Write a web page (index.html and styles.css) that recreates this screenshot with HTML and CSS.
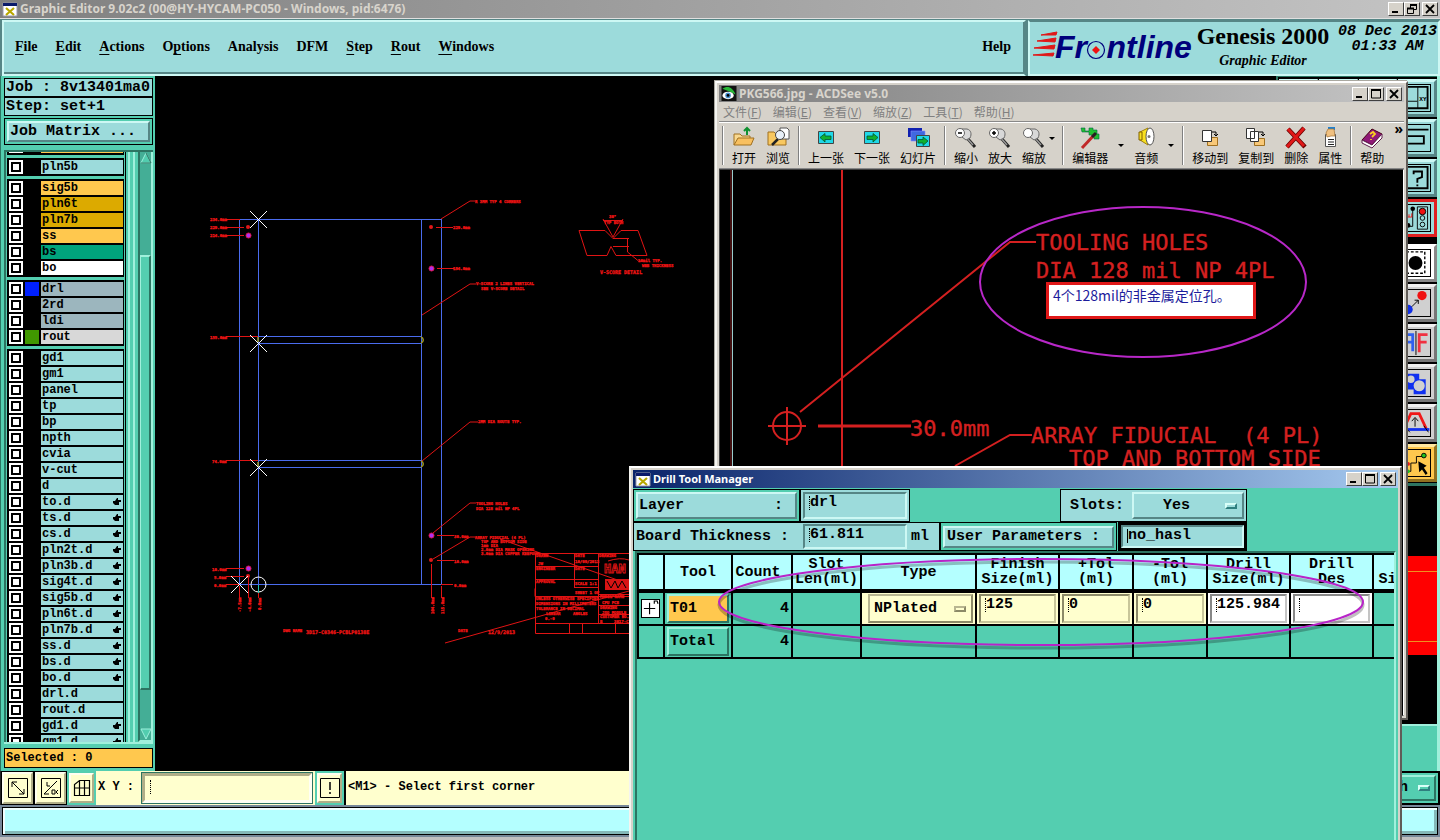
FILE: index.html
```html
<!DOCTYPE html>
<html lang="en">
<head>
<meta charset="utf-8">
<title>Graphic Editor</title>
<link rel="stylesheet" href="styles.css">
</head>
<body>
<svg class="defs" width="0" height="0" aria-hidden="true">
  <symbol id="xwin" viewBox="0 0 16 15"><path d="M1 1h14v13H1z" fill="#fff" stroke="#99a"/><path d="M1 1h14v3H1z" fill="#0a1a6a"/><path d="M4 6l8 7M12 6l-8 7" stroke="#b8a800" stroke-width="2.2"/></symbol>
  <symbol id="min" viewBox="0 0 12 10"><path d="M2 8h6" stroke="#000" stroke-width="2"/></symbol>
  <symbol id="max" viewBox="0 0 12 10"><path d="M1.5 1v8h9V1M1 1h10" fill="none" stroke="#000"/><path d="M1 1h10" stroke="#000" stroke-width="2"/></symbol>
  <symbol id="res" viewBox="0 0 12 10"><path d="M4.500 4V1.500h6v4H8M1.500 4.500h6v5h-6z" fill="none" stroke="#000"/><path d="M4 1h7M1 4.500h7" stroke="#000" stroke-width="1.800"/></symbol>
  <symbol id="cls" viewBox="0 0 12 10"><path d="M2 1l8 8M10 1l-8 8" stroke="#000" stroke-width="1.800"/></symbol>
  <symbol id="lens" viewBox="0 0 24 24"><path d="M14 13l7 8" stroke="#222" stroke-width="3"/><path d="M13 12l6 7" stroke="#999" stroke-width="1.500"/><path d="M5 3h8c4 1 5 5 3 9l-4 2-8-6z" fill="#d8d8d8" stroke="#666"/><circle cx="6" cy="7" r="4.500" fill="#fff" stroke="#666"/></symbol>
  <symbol id="hand" viewBox="0 0 8 8"><path d="M4 0h1v2h3v2H6v3H2L0 5V3h2z"/></symbol>
</svg>

<div class="app">
  <header class="title title-main">
    <svg class="tico"><use href="#xwin"/></svg><h1>Graphic Editor 9.02c2 (00@HY-HYCAM-PC050 - Windows, pid:6476)</h1>
    <span class="wbtns"><button aria-label="Minimize"><svg><use href="#min"/></svg></button><button aria-label="Restore"><svg><use href="#res"/></svg></button><button class="x" aria-label="Close"><svg><use href="#cls"/></svg></button></span>
  </header>

  <div class="menurow">
    <nav class="menubar">
      <button><u>F</u>ile</button><button><u>E</u>dit</button><button><u>A</u>ctions</button><button>O<u>p</u>tions</button><button>Analysis</button><button>DFM</button><button><u>S</u>tep</button><button><u>R</u>out</button><button><u>W</u>indows</button>
      <button class="help">Help</button>
    </nav>
    <div class="brand">
      <svg class="logo" width="162" height="34" viewBox="0 0 162 34" role="img" aria-label="Frontline">
        <path d="M8 5l16-3-1 3zM4 11l19-3-1 4zM1 18l21-3-1 4zM0 25l21-2-1 3z" fill="#e01818" stroke="#e01818"/>
        <text x="22" y="28" class="logotext">Fr<tspan fill="none">o</tspan>ntline</text>
        <circle cx="63" cy="20" r="8.500" fill="none" stroke="#00007c" stroke-width="1.200"/>
        <path d="M63 16l4 4-4 4-4-4z" fill="#f01010"/>
      </svg>
      <div class="product"><strong>Genesis 2000</strong><em>Graphic Editor</em></div>
      <div class="date">08 Dec 2013<br>01:33 AM</div>
    </div>
  </div>

  <div class="work">
    <aside class="side">
      <div class="info">Job : 8v13401ma0</div>
      <div class="info">Step: set+1</div>
      <div class="jm"><button class="bev">Job Matrix ...</button></div>
      <div class="listwrap">
        <div class="list" id="layers"></div>
        <div class="ridges"></div>
        <div class="sbar">
          <svg viewBox="0 0 12 12"><path d="M6 1l5 10H1z" fill="#52cdaf" stroke="#9cf0dc"/><path d="M6 1l5 10H1" fill="none" stroke="#246e5c"/></svg>
          <div class="track"><div class="thumb"></div></div>
          <svg viewBox="0 0 12 12"><path d="M6 11l5-10H1z" fill="#52cdaf" stroke="#9cf0dc"/></svg>
        </div>
      </div>
      <div class="selected">Selected : 0</div>
    </aside>

    <main class="canvas">
      <svg width="1130" height="700" viewBox="155 75 1130 700">
        <g fill="none" stroke="#4a6cee" shape-rendering="crispEdges">
          <path d="M239.500 219.500h202v365h-202zM258.500 219v365M421.500 219v365M258 336.500h163M258 343.500h163M258 460.500h163M258 467.500h163"/>
        </g>
        <g fill="none" stroke="#a09a20" stroke-width="1.500"><path d="M258 337v5M258 462v5M421 337c3 1 3 5 0 6M421 461c3 1 3 5 0 6"/></g>
        <g fill="none" stroke="#e01414">
          <path d="M226 219.500h14M226 227.500h18M226 235.500h18M226 336.500h32M226 460.500h32M226 568.500h18M226 576.500h18M226 584.500h14M436 227.500h17M437 268.500h17M437 535.500h17M437 560.500h17M441 584.500h12"/>
          <path d="M441 219l29-18h5M422 315l48-31h6M422 461l48-39h8M433 533l37-30h6M433 559l37-22h6M239.500 586v12M248.500 578v20M258.500 588v10M431.500 564v34M441.500 586v12M445 643l184-52M500 539l129 45"/>
          <path d="M579 230.500h26l8 8 8-8h17l9 25h-31l-5-9-4 9h-20zM603 219l10 18 10-18M603 220.500h20M613 238.500h16M613 246.500h16M627.500 238v14l11 9h4"/>
          <path d="M629 553.500h-93.500v80H629M535 566.500h63M535 579.500h63M574 587.500h24M535 588.500v8H629M574.500 553v35M598.500 553v70M598 594.500h31M535 623.500h94M569.500 623v10M582.500 623v10M615.500 623v10M598 605.500h31M598 614.500h31"/>
          <path d="M608 561q12-4 21-1"/>
        </g>
        <g fill="#e01818"><circle cx="248" cy="227" r="2"/><circle cx="431" cy="227" r="2"/><circle cx="248" cy="576" r="2"/><circle cx="431" cy="560" r="2"/></g>
        <g fill="#b030f0" stroke="#e01850"><circle cx="248.500" cy="235.500" r="2.500"/><circle cx="431.500" cy="268.500" r="2.500"/><circle cx="248.500" cy="568.500" r="2.500"/><circle cx="431.500" cy="535.500" r="2.500"/></g>
        <g fill="none" stroke="#fff"><path d="M250 211l17 17M267 211l-17 17M250 335l17 17M267 335l-17 17M250 459l17 17M267 459l-17 17M231 576l17 17M248 576l-17 17"/><circle cx="258.500" cy="584.500" r="7.500"/></g>
        <path d="M258.500 585v8" stroke="#20c8b0"/>
        <g class="cad4">
          <text x="210" y="221">234.0mm</text><text x="210" y="229">229.0mm</text><text x="210" y="237">214.0mm</text><text x="210" y="339">155.0mm</text><text x="212" y="463">74.0mm</text><text x="212" y="571">10.0mm</text><text x="214" y="579">5.0mm</text><text x="214" y="587">0.0mm</text>
          <text x="453" y="229">229.0mm</text><text x="453" y="270">194.0mm</text><text x="454" y="538">30.0mm</text><text x="454" y="563">10.0mm</text><text x="454" y="587">0.0mm</text>
          <text x="475" y="203">R 3MM TYP 4 CORNERS</text><text x="476" y="285">V-SCORE 2 LINES VERTICAL</text><text x="481" y="290">SEE V-SCORE DETAIL</text>
          <text x="478" y="423">2MM DIA ROUTE TYP.</text><text x="476" y="505">TOOLING HOLES</text><text x="476" y="510">DIA 128 mil NP 4PL</text>
          <text x="475" y="539">ARRAY FIDUCIAL  (4 PL)</text><text x="481" y="543">TOP AND BOTTOM SIDE</text><text x="481" y="547">1mm DIA</text><text x="481" y="551">2.0mm DIA MASK OPENING</text><text x="481" y="555">3.0mm DIA COPPER KEEPOUT</text>
          <text x="609" y="218">30°</text><text x="604" y="224">TYP BOTH</text><text x="638" y="262">10mil TYP.</text><text x="642" y="267">WEB THICKNESS</text>
          <text x="536" y="557">DRAWN</text><text x="538" y="565">JW</text><text x="575" y="557">DATE</text><text x="575" y="563">10/09/2013</text><text x="599" y="557">DRAWING</text><text x="536" y="570">ENGINEER</text><text x="575" y="570">DATE</text><text x="536" y="583">APPROVAL</text><text x="575" y="585">SCALE 1:1</text><text x="575" y="594">SHEET 1 OF</text>
          <text x="536" y="600">UNLESS OTHERWISE SPECIFIED</text><text x="536" y="605">DIMENSIONS IN MILLIMETERS</text><text x="536" y="610">TOLERANCE IN DECIMAL</text><text x="546" y="615">LINEAR</text><text x="573" y="615">ANGLES</text><text x="545" y="620">0.-0</text><text x="600" y="598">MODEL NAME</text><text x="602" y="604">CPU PCB</text><text x="600" y="609">DRAWING</text><text x="602" y="614">JSO MODULE</text><text x="600" y="618">CUSTOMER NO.</text><text x="600" y="623">B</text><text x="614" y="623">3017-C</text>
          <text x="283" y="632">DWG NAME</text><text x="458" y="632">DATE</text>
          <text transform="translate(241 612) rotate(-90)">-7.5mm</text><text transform="translate(251 612) rotate(-90)">-4.0mm</text><text transform="translate(261 610) rotate(-90)">0.0mm</text><text transform="translate(434 614) rotate(-90)">104.0mm</text><text transform="translate(444 614) rotate(-90)">115.0mm</text>
        </g>
        <g class="cad5"><text x="600" y="274">V-SCORE DETAIL</text><text x="306" y="634">3D17-C0346-PCBLP0138E</text><text x="488" y="634">12/9/2013</text></g>
        <text x="604" y="573" class="han">HAN</text>
        <path d="M605 579h24v11h-24z" fill="#d81414"/><path d="M607 581l4 7 4-7 3 7 4-7 4 7" fill="none" stroke="#000"/>
      </svg>
    </main>

    <aside class="tools">
      <div class="toolgrid">
        <button class="t" aria-label="Zoom"></button><button class="t" aria-label="Pan"></button><button class="t" aria-label="Home"></button>
        <button class="t" aria-label="Coordinates"><svg viewBox="0 0 30 28"><path d="M-2 2h30v23H-2z" fill="none" stroke="#000" stroke-width="2"/><path d="M17.500 2v23M17 17.500H0" stroke="#000"/><text x="19" y="17" font-size="6">XY</text></svg></button>
        <button class="t c4" aria-label="Path"><svg viewBox="0 0 30 28"><path d="M29 5H2v7h22v8H2" fill="none" stroke="#000" stroke-width="2"/></svg></button>
        <button class="t c4" aria-label="Help"><svg viewBox="0 0 30 28"><path d="M0 2h28v23H0" fill="none" stroke="#000" stroke-width="2"/><path d="M13 10V7h9v6l-5 2v4M17 21v2" fill="none" stroke="#000" stroke-width="2"/></svg></button>
        <button class="t c4 red" aria-label="Control"><svg viewBox="0 0 30 28"><path d="M17 2h11v24H17z" fill="#9cdbdb" stroke="#000"/><circle cx="22.500" cy="7" r="3.500" fill="#f01010" stroke="#000"/><circle cx="22.500" cy="14" r="2.500" fill="none" stroke="#000"/><circle cx="22.500" cy="21" r="2.500" fill="none" stroke="#000"/><path d="M12 4v19H6" fill="none" stroke="#000"/><circle cx="12" cy="4" r="2.500"/><circle cx="7" cy="22" r="2.500"/><path d="M11 9v4M5 13h6M8 10v3" stroke="#f01010"/></svg></button>
        <button class="t c4 wh gapt" aria-label="Select"><svg viewBox="0 0 30 28"><path d="M0 2h25v23H0" fill="none" stroke="#000" stroke-width="1.500" stroke-dasharray="3 2"/><circle cx="15" cy="14" r="7.500"/></svg></button>
        <button class="t c4 gr" aria-label="Move"><svg viewBox="0 0 30 28"><circle cx="22" cy="6" r="5" fill="#f01010"/><circle cx="7" cy="21" r="5" fill="#1030e8"/><path d="M11 18l7-7M14 11h4v4" fill="none" stroke="#000"/></svg></button>
        <button class="t c4 gr" aria-label="Mirror"><svg viewBox="0 0 30 28"><path d="M0 5h12v18M0 13h12" fill="none" stroke="#3060f0" stroke-width="3"/><path d="M15.500 1v26" stroke="#000"/><path d="M19 24V5h9M19 13h8" fill="none" stroke="#f03040" stroke-width="3"/></svg></button>
        <button class="t c4 gr" aria-label="Shapes"><svg viewBox="0 0 30 28"><path d="M0 4h19v6h7v16H13v-5H0z" fill="#1030f0"/><circle cx="10" cy="10" r="4" fill="#d0d0d0"/><circle cx="19" cy="17" r="6" fill="#d0d0d0"/></svg></button>
        <button class="t c4 gr" aria-label="Profile"><svg viewBox="0 0 30 28"><path d="M2 21L10 4h9l8 17" fill="none" stroke="#f01818" stroke-width="3"/><path d="M0 21h30" stroke="#1030f0" stroke-width="3"/><path d="M14.500 18V9M11 12l3.500-4 3.500 4M2 17l7 7M24 17l5 7" fill="none" stroke="#000"/></svg></button>
        <button class="t c4 or" aria-label="Chain"><svg viewBox="0 0 30 28"><path d="M4 23h6V14h6V7h7" fill="none" stroke="#000"/><circle cx="24" cy="6" r="2.500" fill="#20c020" stroke="#000"/><circle cx="7" cy="15" r="2" fill="#e01818"/><circle cx="7" cy="23" r="2" fill="#20c020"/><path d="M18 12l9 5-3 2 4 6-2 2-4-6-3 3z"/></svg></button>
      </div>
      <div class="overview"><div class="redboard"></div></div>
      <div class="toolfoot"></div>
    </aside>
  </div>

  <footer class="cmd">
    <button class="sq" aria-label="Pick"><svg viewBox="0 0 20 20"><path d="M.5.5h19v19H.5zM4 4l12 12M4 9V4h5M16 11v5h-5" fill="none" stroke="#000"/></svg></button>
    <button class="sq" aria-label="Angle"><svg viewBox="0 0 20 20"><path d="M.5.5h19v19H.5zM3 16L16 3M6 4v4h3M3 16h5M11 12h3v4h-3zM17 12l-2 2 2 2" fill="none" stroke="#000"/></svg></button>
    <button class="sq grn" aria-label="Grid"><svg viewBox="0 0 20 20"><path d="M2.500 17.500v-11l5-4h10v15zM2 10h16M7.500 3v14M12.500 3v14" fill="none" stroke="#000" stroke-width="1.200"/></svg></button>
    <label for="xy">X Y :</label>
    <span class="xybox"><input id="xy" type="text"><i class="ibar"></i></span>
    <button class="sq grn bang" aria-label="Alert"><svg viewBox="0 0 20 20"><path d="M.5.5h19v19H.5z" fill="none" stroke="#000"/><path d="M10 4v8M10 14v2" stroke="#000" stroke-width="1.500"/></svg></button>
    <output>&lt;M1&gt; - Select first corner</output>
    <span class="cmdopt"><button>h<i class="ind"></i></button></span>
  </footer>
  <div class="status"><div></div></div>
</div>

<section class="win acd" aria-label="ACDSee">
  <div class="title title-acd">
    <svg class="tico" viewBox="0 0 16 16"><path d="M0 0h16v16H0z" fill="#111"/><path d="M1 3c5-4 11-2 14 6L9 6z" fill="#28b838"/><ellipse cx="7" cy="10" rx="6" ry="4" fill="#fff"/><circle cx="7" cy="10" r="3" fill="#4890d0"/><circle cx="7" cy="10" r="1.500"/></svg><h2>PKG566.jpg - ACDSee v5.0</h2>
    <span class="wbtns"><button aria-label="Minimize"><svg><use href="#min"/></svg></button><button aria-label="Maximize"><svg><use href="#max"/></svg></button><button class="x" aria-label="Close"><svg><use href="#cls"/></svg></button></span>
  </div>
  <nav class="acdmenu"><button>文件(<u>F</u>)</button><button>编辑(<u>E</u>)</button><button>查看(<u>V</u>)</button><button>缩放(<u>Z</u>)</button><button>工具(<u>T</u>)</button><button>帮助(<u>H</u>)</button></nav>
  <div class="tb">
    <i class="sep"></i>
    <button><svg viewBox="0 0 24 24"><path d="M2 19V8h6l2 2h8v3" fill="#f8d890" stroke="#a07020"/><path d="M2 19l4-7h16l-3 7z" fill="#f8c060" stroke="#a07020"/><path d="M15 9V2M12 5l3-3 3 3" fill="none" stroke="#109030" stroke-width="2"/></svg>打开</button>
    <button><svg viewBox="0 0 24 24"><path d="M2 19V6h6l2 2h10v11z" fill="#f8c860" stroke="#a07020"/><path d="M14 2h7l2 2v9h-9z" fill="#fff" stroke="#555"/><path d="M12 13l-6 6" stroke="#222" stroke-width="2.500"/><circle cx="14" cy="9" r="4.500" fill="#e8f0f8" stroke="#444"/></svg>浏览</button>
    <i class="sep"></i>
    <button><svg viewBox="0 0 24 24"><path d="M4.500 5.500h15v12h-15z" fill="#20d8e8" stroke="#444"/><path d="M6 11.500l5-4v2.500h6v3.500h-6V16z" fill="#10b030" stroke="#053" stroke-width=".8"/></svg>上一张</button>
    <button><svg viewBox="0 0 24 24"><path d="M4.500 5.500h15v12h-15z" fill="#20d8e8" stroke="#444"/><path d="M18 11.500l-5-4v2.500H7v3.500h6V16z" fill="#10b030" stroke="#053" stroke-width=".8"/></svg>下一张</button>
    <button><svg viewBox="0 0 24 24"><path d="M2 2h14v9H2z" fill="#1020b0"/><path d="M5 5h14v10H5z" fill="#4068e0" stroke="#88f" stroke-width=".6"/><path d="M10.500 9.500h13v11h-13z" fill="#20d8e8" stroke="#444"/><path d="M22 15l-5-4v2.500h-5V17h5v2.500z" fill="#10b030" stroke="#053" stroke-width=".8"/></svg>幻灯片</button>
    <i class="sep"></i>
    <button><svg><use href="#lens"/><path d="M4 7h4" stroke="#000" stroke-width="1.500"/></svg>缩小</button>
    <button><svg><use href="#lens"/><path d="M4 7h4M6 5v4" stroke="#000" stroke-width="1.500"/></svg>放大</button>
    <button class="dd"><svg><use href="#lens"/></svg>缩放</button><b class="arr in"></b>
    <i class="sep"></i>
    <button><svg viewBox="0 0 24 24"><path d="M3 2h4v3h4V2h4v2h4v4h2v5h-5V9h-5V6H4z" fill="#20c030" stroke="#064" stroke-width=".6"/><path d="M4 22L17 8" stroke="#c02828" stroke-width="3"/><path d="M14 11l4-4" stroke="#222" stroke-width="3"/></svg>编辑器</button><b class="arr"></b>
    <button><svg viewBox="0 0 24 24"><path d="M6 6l8-4v17l-8-5z" fill="#f8e020" stroke="#a08010"/><path d="M5 6h3v8H5z" fill="#f8e020" stroke="#806000"/><ellipse cx="16" cy="10.500" rx="4" ry="8.500" fill="#fff" stroke="#555"/><circle cx="15" cy="10.500" r="1.500" fill="#777"/></svg>音频</button><b class="arr"></b>
    <i class="sep"></i>
    <button><svg viewBox="0 0 24 24"><path d="M9.500 11.500h10v8h-10z" fill="#f8c878" stroke="#a07020"/><path d="M4.500 4.500h9v11h-9z" fill="#fff" stroke="#333"/><path d="M14 6h4v3M16 8l2 2 2-2" fill="none" stroke="#000"/></svg>移动到</button>
    <button><svg viewBox="0 0 24 24"><path d="M10.500 12.500h10v7h-10z" fill="#f8c878" stroke="#a07020"/><path d="M2.500 2.500h8v10h-8zM6.500 5.500h8v10h-8z" fill="#fff" stroke="#333"/><path d="M15 6h4v3M17 8l2 2 2-2" fill="none" stroke="#000"/></svg>复制到</button>
    <button><svg viewBox="0 0 24 24"><path d="M4 3l17 18M20 2L3 21" stroke="#600" stroke-width="4.500"/><path d="M4 3l16 17M20 2L3 21" stroke="#e01818" stroke-width="3"/></svg>删除</button>
    <button><svg viewBox="0 0 24 24"><path d="M7.500 8.500h10v12h-10z" fill="#fff" stroke="#555"/><path d="M10 1h7v3h-7z" fill="#2080d0"/><path d="M8 7l2-4h6l1 7h-4l-4 1z" fill="#f0c080" stroke="#a07030" stroke-width=".7"/><path d="M10 13.500h6M10 16h6M10 18.500h6" stroke="#222"/></svg>属性</button>
    <i class="sep"></i>
    <button><svg viewBox="0 0 24 24"><path d="M2 14L12 3l10 5-10 11z" fill="#901878" stroke="#401"/><path d="M2 14l10 5 10-11v4L12 22 2 17z" fill="#fff" stroke="#602050"/><path d="M10 8l3-2 2 2-3 3M11 13v1" fill="none" stroke="#f8d020" stroke-width="1.800"/></svg>帮助</button>
    <span class="more">»</span>
  </div>
  <div class="photo">
    <svg width="684" height="546" viewBox="720 170 684 546">
      <g fill="none" stroke="#d42020" stroke-width="2"><path d="M842 170v546"/><circle cx="787" cy="426" r="14"/><path d="M768 426h38M787 407v38M800 412l210-170h26M955 466l55-31h22"/><path d="M818 426h93" stroke-width="3"/></g>
      <path d="M731 170v546" stroke="#802020"/><path d="M732.500 170v546" stroke="#9cc"/>
      <g class="photext"><text x="1036" y="250">TOOLING HOLES</text><text x="1036" y="278">DIA 128 mil NP 4PL</text><text x="910" y="436">30.0mm</text><text x="1031" y="443" xml:space="preserve">ARRAY FIDUCIAL  (4 PL)</text><text x="1069" y="466">TOP AND BOTTOM SIDE</text></g>
      <path d="M1047.500 283.500h207v34h-207z" fill="#fff" stroke="#e01818" stroke-width="3"/>
      <text x="1053" y="301" class="note">4个128mil的非金属定位孔。</text>
      <ellipse cx="1143" cy="282" rx="163" ry="75" fill="none" stroke="#b828c8" stroke-width="2"/>
    </svg>
  </div>
</section>

<section class="win drill" aria-label="Drill Tool Manager">
  <div class="title title-drill">
    <svg class="tico"><use href="#xwin"/></svg><h2>Drill Tool Manager</h2>
    <span class="wbtns"><button aria-label="Minimize"><svg><use href="#min"/></svg></button><button aria-label="Maximize"><svg><use href="#max"/></svg></button><button class="x" aria-label="Close"><svg><use href="#cls"/></svg></button></span>
  </div>
  <div class="dbody">
    <div class="form">
      <div class="frow">
        <span class="cell green"><button class="bev layer"><span>Layer</span><span>:</span></button></span>
        <span class="cell"><span class="fld"><input id="lay" aria-label="Layer" value="drl"><i class="ibar"></i></span></span>
        <span class="cell slots"><label for="slots">Slots:</label><span class="opt"><select id="slots"><option>Yes</option><option>No</option></select><i class="ind"></i></span></span>
      </div>
      <div class="frow">
        <span class="cell thick"><label for="bt">Board Thickness :</label><span class="fld"><input id="bt" value="61.811"><i class="ibar"></i></span><span>ml</span></span>
        <span class="cell green user"><button class="bev">User Parameters :</button></span>
        <span class="cell focus"><span class="fld"><input id="up" aria-label="User parameters" value="no_hasl"><i class="ibar on"></i></span></span>
      </div>
    </div>
    <div class="tblwrap">
      <table>
        <colgroup><col class="w26"><col class="w68"><col class="w60"><col class="w69"><col class="w115"><col class="w83"><col class="w74"><col class="w74"><col class="w83"><col class="w83"><col class="w83"></colgroup>
        <thead><tr><th></th><th>Tool</th><th class="cnt">Count</th><th>Slot<br>Len(ml)</th><th>Type</th><th>Finish<br>Size(ml)</th><th>+Tol<br>(ml)</th><th>-Tol<br>(ml)</th><th>Drill<br>Size(ml)</th><th>Drill<br>Des</th><th><br>Size(ml)</th></tr></thead>
        <tbody>
          <tr class="gap"><td colspan="11"></td></tr>
          <tr><td><button class="plus" aria-label="Select tool"><svg viewBox="0 0 18 18"><path d="M8 3v12M2 9h12M13 4V1h3l1 3" fill="none" stroke="#000" stroke-width="1.200"/></svg></button></td><td><button class="bev tool on">T01</button></td><td class="num">4</td><td></td>
            <td class="y"><span class="opt"><select aria-label="Type"><option>NPlated</option><option>Plated</option></select><i class="ind"></i></span></td>
            <td class="y"><span class="fld"><input aria-label="Finish size" value="125"><i class="ibar"></i></span></td>
            <td class="y"><span class="fld"><input aria-label="Plus tolerance" value="0"><i class="ibar"></i></span></td>
            <td class="y"><span class="fld"><input aria-label="Minus tolerance" value="0"><i class="ibar"></i></span></td>
            <td class="w"><span class="fld"><input aria-label="Drill size" value="125.984"><i class="ibar"></i></span></td>
            <td class="w"><span class="fld"><input aria-label="Drill designator"><i class="ibar"></i></span></td><td></td></tr>
          <tr><td></td><td><button class="bev tool">Total</button></td><td class="num">4</td><td></td><td></td><td></td><td></td><td></td><td></td><td></td><td></td></tr>
        </tbody>
      </table>
    </div>
  </div>
  <svg class="mark" width="660" height="110" viewBox="712 550 660 110"><ellipse cx="1041" cy="605" rx="322" ry="43" fill="none" stroke="#000" stroke-opacity=".25" stroke-width="3"/><ellipse cx="1041" cy="602" rx="322" ry="43" fill="none" stroke="#b824c8" stroke-width="2"/></svg>
</section>
<script src="layers.js"></script>
</body>
</html>
```
FILE: styles.css
```css
* { box-sizing: border-box; }
:root {
  --teal: #9cdbdb; --teal-hi: #cdf8f4; --teal-lo: #568686;
  --green: #54ceb0; --green-hi: #a0f0dc; --green-lo: #2c7462;
  --gray: #d6d2ca; --cream: #ffffce; --orange: #ffc84e;
  --mono: "Liberation Mono", monospace;
  --serif: "Liberation Serif", serif;
  --ui: "Noto Sans", "Noto Sans CJK SC", sans-serif;
}
body { margin: 0; height: 100vh; overflow: hidden; position: relative; background: #000; font: bold 15px/18px var(--mono); color: #000; }
button, input, select { font: inherit; color: inherit; padding: 0; margin: 0; border: 0; background: none; border-radius: 0; }
h1, h2 { margin: 0; font: inherit; }
.defs { position: absolute; }
.app { height: 100vh; display: flex; flex-direction: column; background: #a9b4b0; }

.title { display: flex; align-items: center; height: 18px; padding: 0 2px; gap: 2px; font: bold 12px/16px var(--ui); white-space: nowrap; color: #d8d4cc; }
.title-main, .title-acd { background: linear-gradient(90deg, #808080, #c4c4c4); }
.title-drill { background: linear-gradient(90deg, #0a246a, #a6caf0); color: #fff; font-size: 11px; }
.title-main { flex: none; height: 19px; border-bottom: 1px solid #e0e0e0; }
.tico { width: 16px; height: 15px; flex: none; }
.wbtns { margin-left: auto; display: flex; }
.wbtns button { width: 16px; height: 14px; background: var(--gray); border: 1px solid; border-color: #fff #404040 #404040 #fff; display: grid; place-items: center; }
.wbtns .x { margin-left: 2px; }
.wbtns svg { width: 12px; height: 10px; display: block; }

.menurow { flex: none; display: flex; gap: 2px; height: 57px; background: var(--teal-lo); padding: 1px 0 0 2px; }
.menubar, .brand { background: var(--teal); border: 2px solid; border-color: var(--teal-hi) var(--teal-lo) var(--teal-hi) var(--teal-hi); box-shadow: inset -1px -2px 0 var(--teal-lo); display: flex; align-items: center; }
.menubar { flex: 1; gap: 18px; padding: 0 13px 2px 11px; font: bold 14px/18px var(--serif); }
.menubar button { white-space: nowrap; }
.menubar u { text-underline-offset: 3px; }
.help { margin-left: auto; }
.brand { width: 412px; padding-left: 3px; box-shadow: none; border-color: var(--teal-lo) var(--teal-hi) var(--teal-hi); align-items: flex-start; }
.logo { flex: none; margin-top: 8px; }
.logotext { font: italic bold 32px "Liberation Sans", sans-serif; fill: #00007c; }
.product { display: flex; flex-direction: column; align-items: center; font-family: var(--serif); width: 136px; flex: none; white-space: nowrap; }
.product strong { font-size: 24px; line-height: 28px; }
.product em { font-size: 14px; line-height: 22px; }
.date { font-style: italic; line-height: 15px; text-align: center; white-space: nowrap; margin: 2px 1px 0 auto; }

.work { flex: 1; min-height: 0; display: flex; background: #000; }
.side { width: 155px; flex: none; background: var(--green); display: flex; flex-direction: column; padding: 2px 2px 2px 3px; border-left: 1px solid var(--green-lo); }
.info { flex: none; height: 19px; border: 1px solid #000; background: var(--teal); padding-left: 1px; white-space: nowrap; overflow: hidden; line-height: 17px; }
.jm { border: 1px solid #000; height: 27px; margin: 2px 0 5px; padding: 2px; display: flex; }
.bev { background: var(--teal); border: 2px solid; border-color: var(--teal-hi) var(--teal-lo) var(--teal-lo) var(--teal-hi); text-align: left; padding: 0 2px; flex: 1; white-space: nowrap; }
.jm .bev { padding: 0 1px; }
.listwrap { flex: 1; min-height: 0; display: flex; border-top: 2px solid var(--green-lo); border-bottom: 2px solid var(--green-hi); margin-bottom: 4px; }
.list { width: 122px; border-left: 2px solid var(--green-lo); padding-left: 1px; overflow: hidden; font-size: 12px; line-height: 14px; box-shadow: inset -1px 0 0 #000; padding-right: 2px; }
.grp { background: #000; padding: 1px 1px 1px 2px; margin-bottom: 3px; }
.grp:first-child { margin-top: -15px; }
.row { height: 16px; padding: 1px 0; display: grid; grid-template-columns: 14px 14px 1fr; gap: 2px; }
.row input { appearance: none; width: 14px; height: 14px; background: #fff; border: 2px solid #fff; box-shadow: inset 0 0 0 2px #000; }
.row label { background: var(--teal); padding-left: 1px; display: flex; justify-content: space-between; align-items: center; line-height: 13px; }
.row label svg { width: 8px; height: 8px; margin-right: 2px; }
.sw.blue { background: #0020ff; }
.sw.grn { background: #409800; }
.row .or { background: var(--orange); }
.row .gd { background: #dcaa00; }
.row .gn { background: #00a47c; }
.row .wt { background: #fff; }
.row .sl { background: #9cb6be; }
.row .lt { background: #d8d8d8; }
.ridges { flex: 1; border-left: 2px solid var(--green); background: linear-gradient(90deg, var(--green-hi) 0 2px, var(--green) 2px 5px, var(--green-hi) 5px 7px, var(--green) 7px); }
.sbar { width: 15px; background: #44ae96; border: 2px solid; border-color: var(--green-lo) var(--green-hi) var(--green-hi) var(--green-lo); border-top: 0; display: flex; flex-direction: column; }
.sbar svg { width: 12px; height: 12px; flex: none; }
.track { flex: 1; display: flex; flex-direction: column; padding: 91px 0 38px; }
.thumb { flex: 1; background: var(--green); border: 2px solid; border-color: var(--green-hi) var(--green-lo) var(--green-lo) var(--green-hi); border-left-width: 1px; }
.selected { background: var(--orange); border: 1px solid #000; height: 20px; font-size: 12px; padding-left: 1px; margin-bottom: 1px; }
.canvas { flex: 1; min-width: 0; overflow: hidden; background: #000; }
.canvas svg { display: block; margin-top: -1px; }
.cad4, .cad5, .han { font-family: "DejaVu Sans Mono", monospace; font-weight: bold; fill: #f01414; font-size: 4px; }
.cad4, .cad5 { stroke: #f01414; stroke-width: .3px; }
.cad5 { font-size: 5px; }
.han { font-size: 12px; fill: none; stroke: #d81414; }

.tools { width: 164px; flex: none; background: var(--green); border-right: 3px solid var(--green-hi); border-left: 2px solid var(--green-lo); display: flex; flex-direction: column; }
.toolgrid { display: grid; grid-template-columns: repeat(4, 1fr); background: #000; padding: 2px 0 1px 1px; gap: 2px 1px; border-top: 1px solid var(--green-lo); }
.t { height: 38px; background: var(--teal); border: 3px solid; border-color: var(--teal-hi) var(--teal-lo) var(--teal-lo) var(--teal-hi); padding: 0; overflow: hidden; display: grid; align-items: center; justify-items: start; font-family: var(--ui); }
.t svg { width: 30px; height: 28px; border-right: 1px solid #000; border-bottom: 1px solid #000; border-top: 1px solid #000; }
.c4 { grid-column: 4; }
.t.red { background: var(--teal); border-color: #e02020; }
.t.gr { background: #d0d0d0; border-color: #f0f0f0 #777 #777 #f0f0f0; }
.t.wh { background: #fff; border-color: #fff #888 #888 #fff; }
.t.or { background: var(--orange); border-color: #ffe8a0 #907020 #907020 #ffe8a0; }
.gapt { margin-top: 5px; }
.overview { flex: 1; background: #000; border-top: 3px solid var(--green-lo); display: flex; flex-direction: column; justify-content: center; }
.redboard { height: 99px; background: linear-gradient(#f00 0 15px, #f09020 15px 16px, #f00 16px 85px, #f09020 85px 86px, #f00 86px); }
.toolfoot { height: 47px; border-top: 2px solid var(--green-hi); }

.cmd { flex: none; height: 34px; display: flex; align-items: stretch; background: var(--cream); border-left: 1px solid #222; font-size: 12px; }
.cmd .sq { width: 31px; margin: 1px; border: 2px solid; border-color: #fffff0 #b0ae88 #b0ae88 #fffff0; outline: 1px solid #000; display: grid; place-items: center; background: var(--cream); }
.cmd .sq.grn { outline: 2px solid var(--green); width: 25px; margin: 2px; }
.cmd .sq.bang { margin-left: 5px; }
.cmd .sq svg { width: 20px; height: 20px; }
.cmd label { padding: 7px 8px 0 2px; white-space: nowrap; }
.xybox { position: relative; width: 170px; outline: 1px solid var(--green-lo); border: 3px solid; border-color: #b0ae88 #fffff4 #fffff4 #b0ae88; margin: 2px 0; }
.xybox input { width: 100%; height: 100%; display: block; padding-left: 8px; }
.cmd output { border-left: 2px solid #000; padding: 7px 0 0 2px; flex: 1; }
.ibar { position: absolute; left: 5px; top: 4px; height: 14px; border-left: 1px dotted #000; }
.ibar.on { border-left-style: solid; }
.cmdopt { width: 162px; background: var(--green); border: 2px solid #000; display: flex; padding: 2px; }
.cmdopt button { flex: 1; border: 2px solid; border-color: var(--green-hi) var(--green-lo) var(--green-lo) var(--green-hi); display: flex; justify-content: flex-end; align-items: center; gap: 10px; padding-right: 4px; font-size: 15px; }
.ind { width: 12px; height: 6px; border: 2px solid; border-color: #d8fff8 #2f7f7f #2f7f7f #d8fff8; }
.status { flex: none; background: #789; padding: 2px 2px 2px; border-bottom: 3px solid #c0c0c0; }
.status div { height: 28px; border: 1px solid #000; background: #b4ffff; box-shadow: inset 2px 2px 0 #f0ffff, inset -3px -3px 0 #84b8b8; }

.win { position: absolute; background: var(--gray); border: 2px solid; border-color: #fff #605c58 #605c58 #f4f4f0; padding: 2px; }
.acd { left: 715px; top: 81px; width: 693px; height: 639px; display: flex; flex-direction: column; font: 12px/16px var(--ui); box-shadow: -1px -1px 0 #aaa8a0; }
.acd .title { flex: none; height: 17px; }
.acdmenu { display: flex; gap: 11px; padding: 1px 4px; color: #808080; height: 20px; border-bottom: 1px solid #888; font: 12px/17px "Noto Sans CJK SC", sans-serif; }
.acdmenu button { white-space: nowrap; }
.tb { display: flex; align-items: flex-start; height: 47px; border-top: 1px solid #fff; padding: 3px 1px 0 3px; font: 12px/16px "Noto Sans CJK SC", sans-serif; flex: none; border-bottom: 1px solid #888; }
.tb button { display: flex; flex-direction: column; align-items: center; padding: 0 5px; white-space: nowrap; line-height: 15px; }
.tb svg { width: 24px; height: 24px; display: block; }
.sep { width: 2px; height: 39px; border-left: 1px solid #808080; border-right: 1px solid #fff; margin: 0 3px; flex: none; }
.sep:first-child { margin-left: 0; }
.arr { border: 3px solid transparent; border-top-color: #000; border-bottom: 0; margin: 18px 5px 0; height: 3px; width: 6px; }
.arr.in { margin: 11px 4px 0 -2px; }
.tb .more { margin: -5px 0 0 auto; font: bold 14px/16px var(--ui); }
.photo { flex: 1; min-height: 0; overflow: hidden; background: #000; border: 1px solid #404040; border-right-color: #fff; }
.photo svg { display: block; }
.photext { font: 22px "DejaVu Sans Mono", monospace; fill: #d42020; stroke: #d42020; stroke-width: .4px; }
.note { font: 14px "Noto Sans CJK SC", sans-serif; fill: #1c1c9c; }

.drill { left: 629px; top: 466px; width: 773px; bottom: -6px; }
.dbody { background: var(--green); position: absolute; inset: 20px 2px 0 2px; overflow: hidden; padding-top: 1px; }
.form { width: 614px; }
.frow { display: flex; }
.frow .cell { height: 33px; border: 1px solid #000; background: var(--teal); display: flex; align-items: center; padding: 2px; white-space: nowrap; }
.frow:nth-child(2) .cell { height: 29px; }
.frow .green { background: var(--green); }
.layer { width: 161px; align-self: stretch; display: flex; justify-content: space-between; align-items: center; padding: 0 12px 0 1px; }
.frow .cell:first-child .bev { align-self: stretch; }
.fld { position: relative; display: block; flex: 1; align-self: stretch; border: 2px solid; border-color: var(--teal-lo) var(--teal-hi) var(--teal-hi) var(--teal-lo); }
.fld input { display: block; width: 100%; height: 17px; padding-left: 5px; outline: 0; }
.frow .fld { width: 104px; }
.fld .ibar { top: 2px; left: 4px; }
.frow .slots { margin-left: auto; width: 187px; padding-left: 9px; gap: 8px; }
.opt { position: relative; display: block; flex: 1; align-self: stretch; border: 2px solid; border-color: var(--teal-hi) var(--teal-lo) var(--teal-lo) var(--teal-hi); }
.opt select { appearance: none; display: block; width: 100%; height: 100%; outline: 0; }
.slots select { padding-left: 29px; }
.opt .ind { position: absolute; right: 5px; top: 50%; margin-top: -3px; }
.frow .thick { width: 307px; gap: 14px; padding: 1px 2px; }
.thick .fld { flex: none; }
.thick span:last-child { margin-left: -10px; }
.user { width: 177px; }
.frow .focus { margin-left: auto; width: 129px; border-width: 3px; padding: 0; }
.tblwrap { margin: 0 2px 0; border-left: 2px solid var(--green-lo); border-top: 2px solid var(--green-lo); border-right: 2px solid var(--green-hi); overflow: hidden; height: 400px; }
table { table-layout: fixed; border-collapse: collapse; width: 818px; line-height: 15px; }
.w26 { width: 26px; } .w68 { width: 68px; } .w60 { width: 60px; } .w69 { width: 69px; } .w115 { width: 115px; } .w83 { width: 83px; } .w74 { width: 74px; }
th { background: #b4ffff; height: 36px; border: 2px solid #000; padding: 0; font: inherit; line-height: 15px; white-space: nowrap; }
.cnt { padding-right: 8px; }
td { height: 33px; border: 2px solid #000; padding: 1px 2px; vertical-align: middle; }
.gap td { height: 1px; padding: 0; border-left: 0; border-right: 0; line-height: 0; }
.num { text-align: right; }
td .opt, td .fld { height: 29px; }
td.y { background: var(--cream); }
td.w { background: #fff; }
td.y .fld { border-color: #8c8a68 #c8c69a #c8c69a #8c8a68; border-width: 2px; }
td.w .fld { border-color: #888 #c4c4c4 #c4c4c4 #888; }
td.y .opt { border-color: #b8b690 #8c8a68 #8c8a68 #b8b690; margin-left: 4px; }
td select { padding-left: 4px; }
td.y .ind { border-color: #b8b690 #8c8a68 #8c8a68 #b8b690; }
.tool { display: block; width: 100%; height: 29px; padding: 0 1px; background: var(--green); border-color: var(--green-hi) var(--green-lo) var(--green-lo) var(--green-hi); }
.tool.on { background: var(--orange); }
.plus { display: block; width: 19px; height: 19px; background: #fff; border: 1px solid #000; }
.plus svg { display: block; width: 17px; height: 17px; }
.mark { position: absolute; left: 81px; top: 82px; pointer-events: none; }
```
FILE: layers.js
```js
const groups = [
  [["sig4t", "or"]],
  [["pln5b"]],
  [["sig5b", "or"], ["pln6t", "gd"], ["pln7b", "gd"], ["ss", "or"], ["bs", "gn"], ["bo", "wt"]],
  [["drl", "sl", "blue"], ["2rd", "sl"], ["ldi", "sl"], ["rout", "lt", "grn"]],
  ["gd1", "gm1", "panel", "tp", "bp", "npth", "cvia", "v-cut", "d", "to.d*", "ts.d*", "cs.d*", "pln2t.d*", "pln3b.d*", "sig4t.d*", "sig5b.d*", "pln6t.d*", "pln7b.d*", "ss.d*", "bs.d*", "bo.d*", "drl.d", "rout.d", "gd1.d*", "gm1.d*"].map(n => [n])
];
let n = 0;
document.getElementById("layers").innerHTML = groups.map(g =>
  '<div class="grp">' + g.map(([name, cls = "", sw = ""]) => {
    const id = "layer" + n++;
    const hand = name.endsWith("*") ? '<svg><use href="#hand"/></svg>' : "";
    return `<div class="row"><input type="checkbox" id="${id}"><span class="sw ${sw}"></span><label for="${id}" class="${cls}">${name.replace("*", "")}${hand}</label></div>`;
  }).join("") + "</div>").join("");
```
